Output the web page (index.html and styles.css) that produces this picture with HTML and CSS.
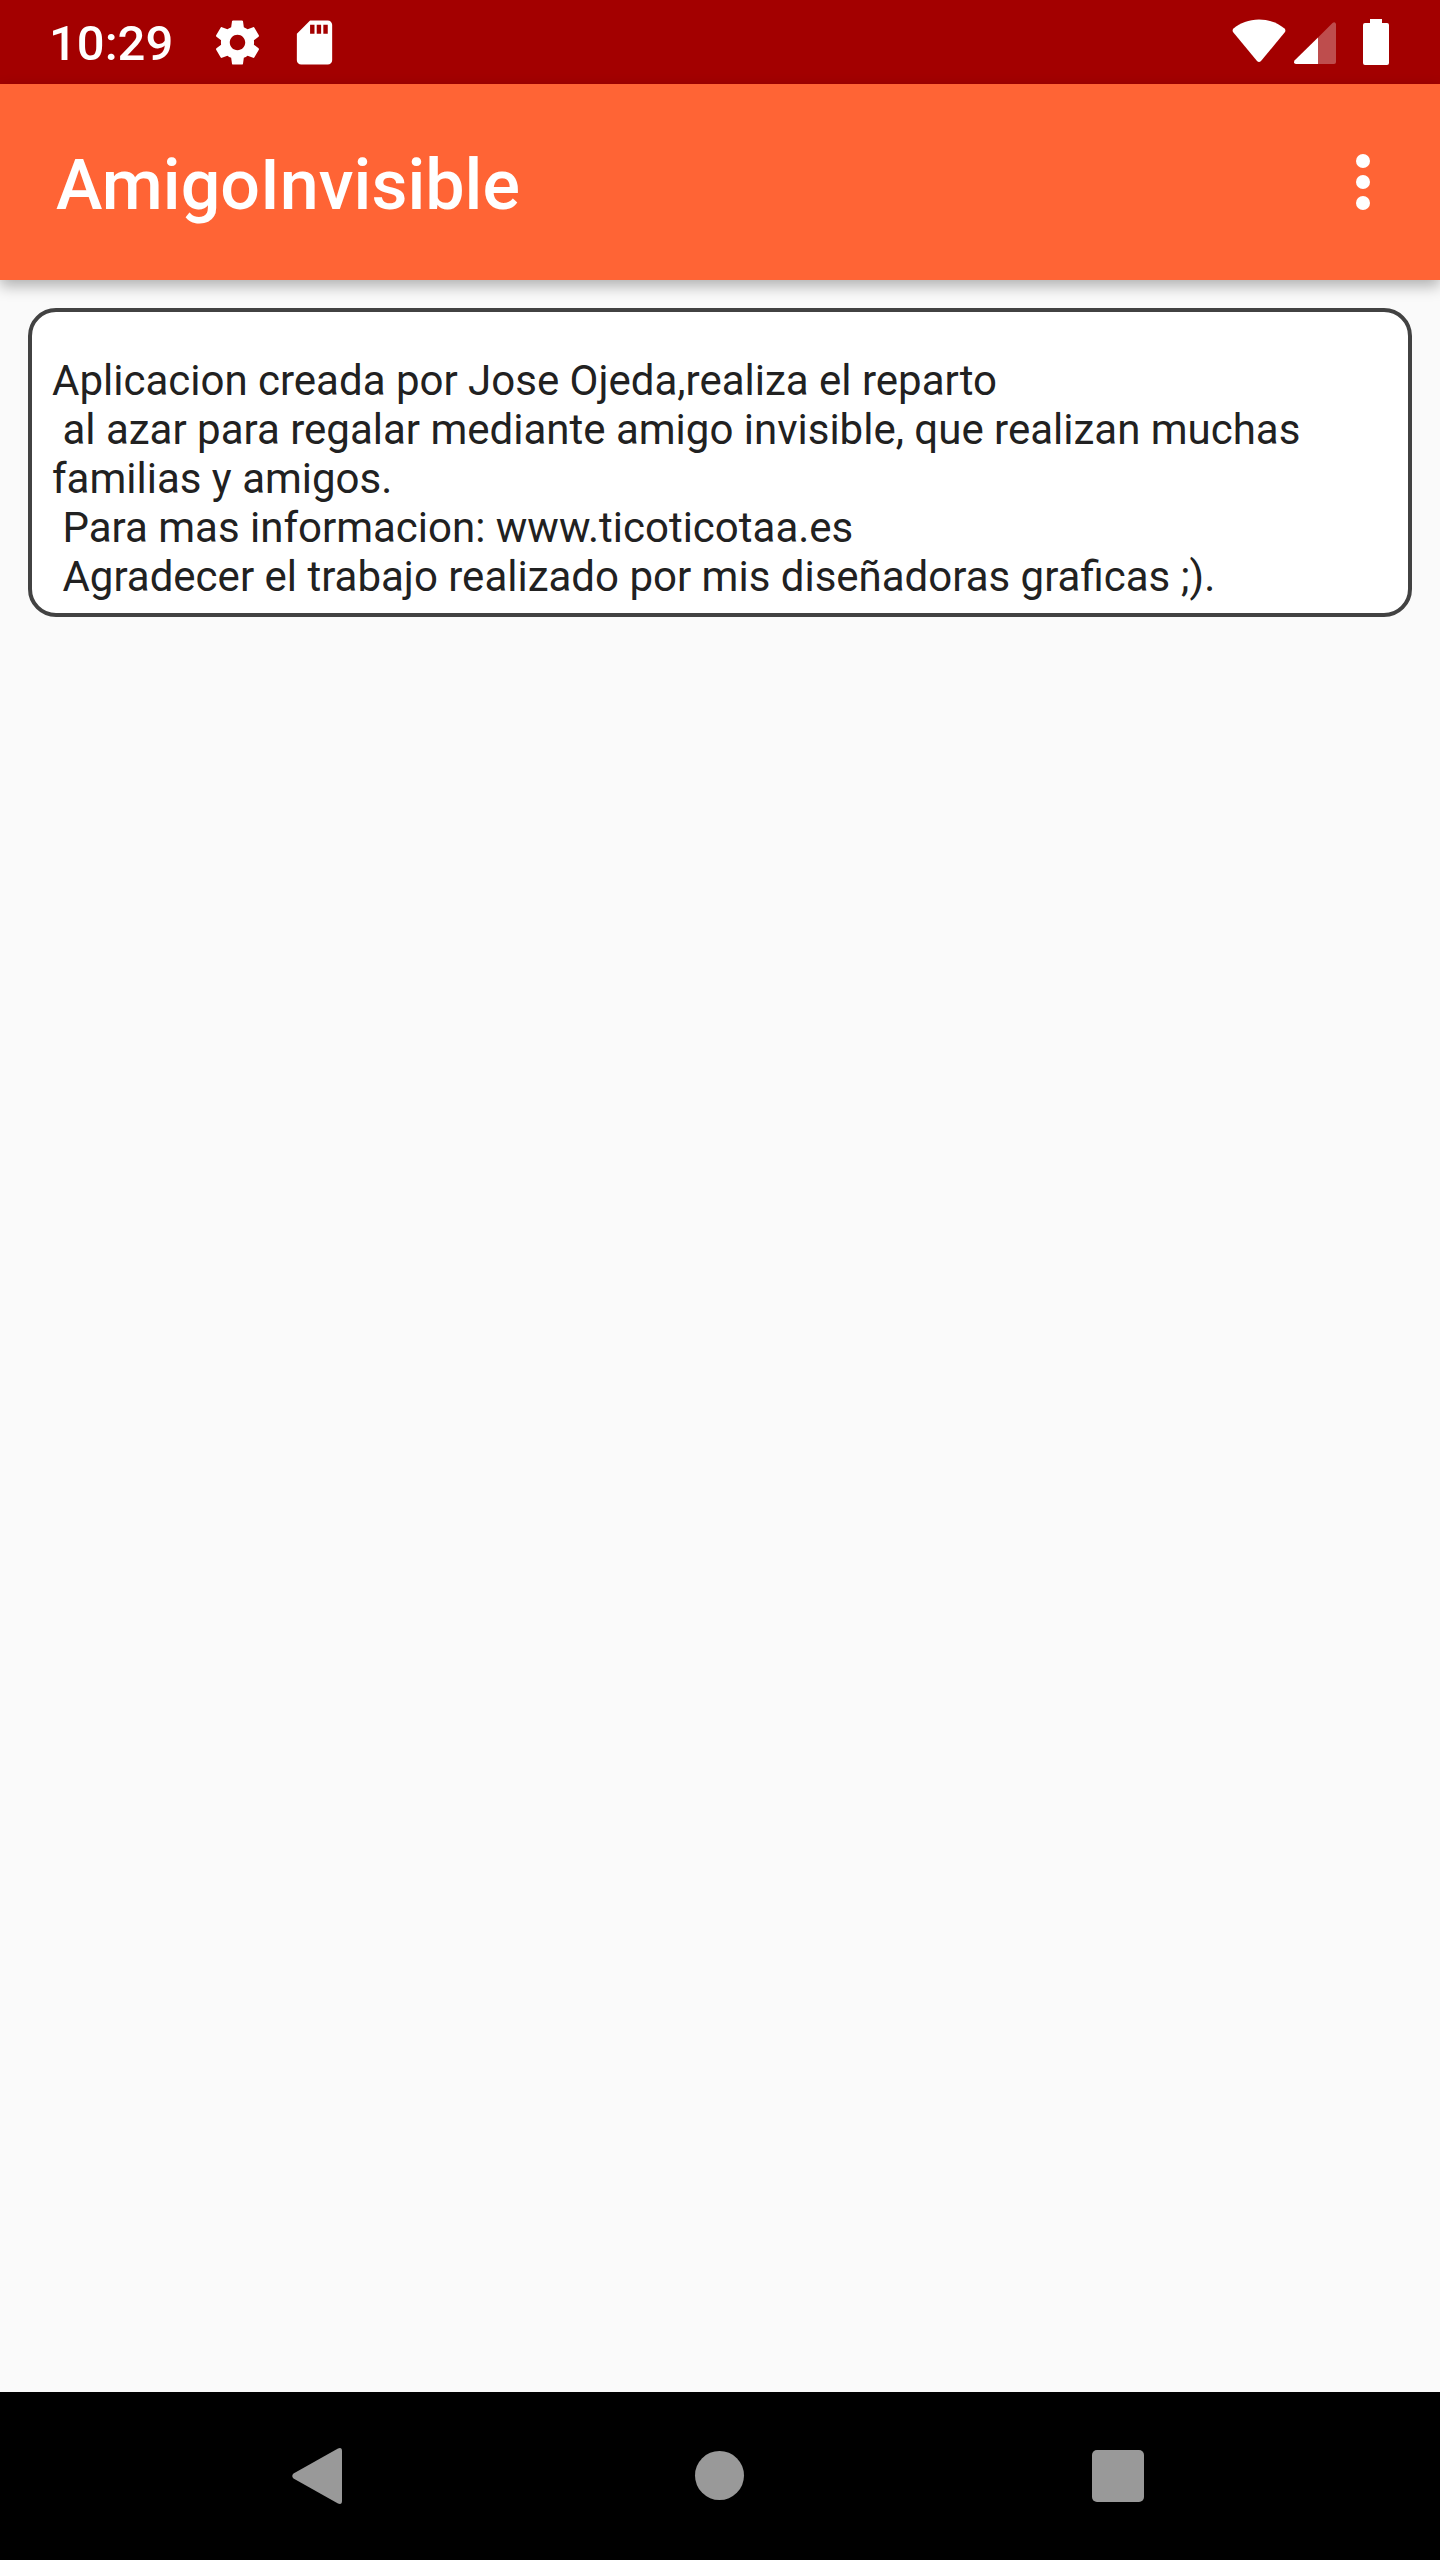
FILE: index.html
```html
<!DOCTYPE html>
<html lang="es">
<head>
  <meta charset="UTF-8">
  <meta name="viewport" content="width=device-width, initial-scale=1.0">
  <title>AmigoInvisible</title>
  <link rel="stylesheet" href="styles.css">
</head>
<body>
  <div class="status-bar">
    <time class="clock">10:29</time>
    <div class="notifications">
      <svg width="53" height="53" viewBox="0 0 24 24" fill="#fff" aria-hidden="true">
        <path d="M19.43 12.98c.04-.32.07-.64.07-.98s-.03-.66-.07-.98l2.11-1.65c.19-.15.24-.42.12-.64l-2-3.46c-.12-.22-.39-.3-.61-.22l-2.49 1c-.52-.4-1.08-.73-1.69-.98l-.38-2.65C14.46 2.18 14.25 2 14 2h-4c-.25 0-.46.18-.49.42l-.38 2.65c-.61.25-1.17.59-1.69.98l-2.49-1c-.23-.09-.49 0-.61.22l-2 3.46c-.13.22-.07.49.12.64l2.11 1.65c-.04.32-.07.65-.07.98s.03.66.07.98l-2.11 1.65c-.19.15-.24.42-.12.64l2 3.46c.12.22.39.3.61.22l2.49-1c.52.4 1.08.73 1.69.98l.38 2.65c.03.24.24.42.49.42h4c.25 0 .46-.18.49-.42l.38-2.65c.61-.25 1.17-.59 1.69-.98l2.49 1c.23.09.49 0 .61-.22l2-3.46c.12-.22.07-.49-.12-.64l-2.11-1.65zM12 15.5c-1.93 0-3.5-1.57-3.5-3.5s1.57-3.5 3.5-3.5 3.5 1.57 3.5 3.5-1.57 3.5-3.5 3.5z"/>
      </svg>
      <svg width="53" height="53" viewBox="0 0 24 24" fill="#fff" aria-hidden="true">
        <path d="M18 2h-8L4.02 8 4 20c0 1.100.9 2 2 2h12c1.100 0 2-.9 2-2V4c0-1.100-.9-2-2-2zm-6 6h-2V4h2v4zm3 0h-2V4h2v4zm3 0h-2V4h2v4z"/>
      </svg>
    </div>
    <div class="system-icons">
      <svg width="54" height="46" viewBox="0 0 54 46" fill="#fff" aria-hidden="true">
        <path d="M1.500 9.500C8 4 17 .5 27 .5S46 4 52.500 9.500Q54 11 53 13L29 42Q27 44 25 42L1 13Q0 11 1.500 9.500z"/>
      </svg>
      <svg width="42" height="46" viewBox="0 0 42 46" fill="#fff" aria-hidden="true">
        <path d="M24 18.500V45H2Q-1 44.500.5 41.500z"/>
        <path d="M24 18.500 38.500 4Q41 2 42 5V43Q42 45 40 45H24z" opacity=".3"/>
      </svg>
      <svg class="battery" width="26" height="46" viewBox="0 0 26 46" fill="#fff" aria-hidden="true">
        <path d="M7 0H19V4H24Q26 4 26 6V44Q26 46 24 46H2Q0 46 0 44V6Q0 4 2 4H7z"/>
      </svg>
    </div>
  </div>

  <header class="toolbar">
    <h1 class="title">AmigoInvisible</h1>
    <button class="menu-button" type="button" aria-label="Más opciones">
      <svg width="14" height="56" viewBox="0 0 14 56" fill="#fff">
        <circle cx="7" cy="7" r="7"/>
        <circle cx="7" cy="28" r="7"/>
        <circle cx="7" cy="49" r="7"/>
      </svg>
    </button>
  </header>

  <main class="content">
    <p class="about">Aplicacion creada por Jose Ojeda,realiza el reparto
 al azar para regalar mediante amigo invisible, que realizan muchas familias y amigos.
 Para mas informacion: www.ticoticotaa.es
 Agradecer el trabajo realizado por mis diseñadoras graficas ;).</p>
  </main>

  <nav class="nav-bar">
    <button type="button" aria-label="Atrás">
      <svg width="56" height="56" viewBox="0 0 56 56" fill="#999">
        <path d="M1.500 25.500 46 .5Q50 -1 50 3V53Q50 57 46 55.500L1.500 30.500Q-1 28 1.500 25.500z"/>
      </svg>
    </button>
    <button type="button" aria-label="Inicio">
      <svg width="56" height="56" viewBox="0 0 56 56" fill="#999">
        <circle cx="27.500" cy="27.500" r="24.500"/>
      </svg>
    </button>
    <button type="button" aria-label="Recientes">
      <svg width="56" height="56" viewBox="0 0 56 56" fill="#999">
        <rect x="0" y="2" width="52" height="52" rx="5"/>
      </svg>
    </button>
  </nav>
</body>
</html>
```
FILE: styles.css
```css
* {
  box-sizing: border-box;
}

body {
  margin: 0;
  min-height: 100vh;
  display: flex;
  flex-direction: column;
  font-family: Roboto, "Liberation Sans", sans-serif;
  background-color: #fafafa;
  color: #212121;
}

svg {
  display: block;
  flex-shrink: 0;
}

button {
  display: flex;
  align-items: center;
  justify-content: center;
  padding: 0;
  border: none;
  background: none;
  cursor: pointer;
}

.status-bar {
  display: flex;
  align-items: center;
  height: 84px;
  padding: 0 51px 0 49px;
  background-color: #a30000;
  color: #fff;
}

.clock {
  padding-top: 4px;
  font-size: 49px;
  font-weight: 500;
  line-height: 56px;
}

.notifications {
  display: flex;
  gap: 24px;
  margin-left: 38px;
}

.system-icons {
  display: flex;
  gap: 8px;
  margin-left: auto;
}

.battery {
  margin-left: 19px;
}

.toolbar {
  display: flex;
  align-items: center;
  justify-content: space-between;
  height: 196px;
  padding: 0 35px 0 56px;
  background-color: #ff6435;
  color: #fff;
  box-shadow: 0 6px 14px rgba(0, 0, 0, 0.3);
}

.title {
  margin: 0;
  padding-top: 6px;
  font-size: 70px;
  font-weight: 500;
  line-height: 82px;
}

.menu-button {
  width: 84px;
  height: 168px;
}

.content {
  flex: 1;
  padding: 28px;
}

.about {
  margin: 0;
  padding: 44px 20px 12px;
  border: 4px solid #424242;
  border-radius: 28px;
  background-color: #fff;
  font-size: 42px;
  line-height: 49px;
  white-space: pre-wrap;
}

.nav-bar {
  display: flex;
  height: 168px;
  padding: 0 120px;
  background-color: #000;
}

.nav-bar button {
  flex: 1;
}
```
